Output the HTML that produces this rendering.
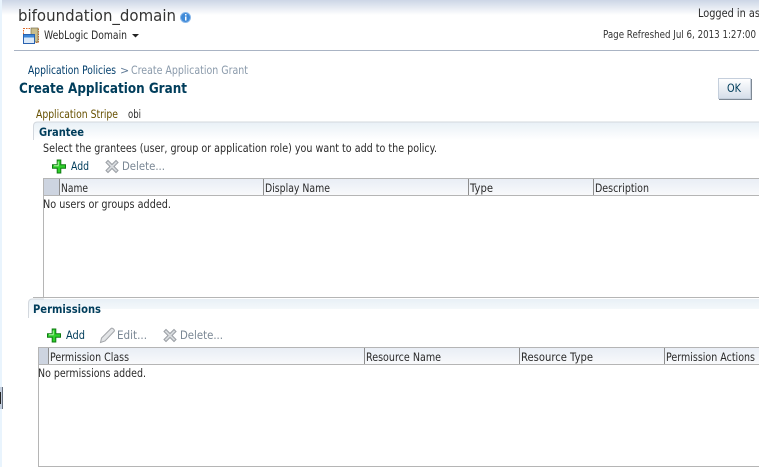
<!DOCTYPE html>
<html><head><meta charset="utf-8"><style>
html,body{margin:0;padding:0;background:#fff;width:759px;height:467px;overflow:hidden}
svg{display:block}
text{font-family:"DejaVu Sans","Liberation Sans",sans-serif;font-size:11.5px;fill:#2a2a2a}
</style></head><body>
<svg width="759" height="467" viewBox="0 0 759 467" xmlns="http://www.w3.org/2000/svg">
<defs>
<linearGradient id="top" x1="0" y1="0" x2="0" y2="1"><stop offset="0" stop-color="#ccd6e6"/><stop offset="1" stop-color="#fff"/></linearGradient>
<linearGradient id="sec" x1="0" y1="0" x2="0" y2="1"><stop offset="0" stop-color="#e8f0f6"/><stop offset="1" stop-color="#fff"/></linearGradient>
<linearGradient id="th" x1="0" y1="0" x2="0" y2="1"><stop offset="0" stop-color="#e9eef5"/><stop offset="1" stop-color="#f8f9fb"/></linearGradient>
<linearGradient id="btn" x1="0" y1="0" x2="0" y2="1"><stop offset="0" stop-color="#fff"/><stop offset="1" stop-color="#d5deea"/></linearGradient>
<g id="plus"><path d="M5.200 .5h3.600v4.700h4.700v3.600H8.800v4.700H5.200V8.800H.5V5.200h4.700z" fill="#2fd02a" stroke="#0f7a12" stroke-width="1"/><path d="M6.200 2v4.200H2" fill="none" stroke="#b5f5a8" stroke-width="1"/></g>
<g id="x"><path d="M1 3l2-2 4 4 4-4 2 2-4 4 4 4-2 2-4-4-4 4-2-2 4-4z" fill="#d8dbde" stroke="#9a9ea4" stroke-width="1"/></g>
</defs>

<rect x="0" y="0" width="2" height="467" fill="#e9f4fd"/>
<rect x="2" y="0" width="757" height="15" fill="url(#top)"/>
<rect x="0" y="387" width="3" height="22" fill="#c3cede"/>
<rect x="0" y="392" width="1" height="12" fill="#222"/>
<rect x="2" y="387" width="1" height="22" fill="#66707e"/>

<text x="18" y="21" textLength="158" lengthAdjust="spacingAndGlyphs" style="font-size:16px;fill:#333">bifoundation_domain</text>
<circle cx="185.500" cy="17.500" r="5" fill="#3f8ad8" stroke="#8ab8ea"/>
<rect x="185" y="14" width="1.500" height="1.500" fill="#fff"/><rect x="185" y="16.500" width="1.500" height="4" fill="#fff"/>

<rect x="23.500" y="28.500" width="15" height="14" fill="#fff" stroke="#dd6a2a" stroke-dasharray="1.500 1"/>
<rect x="31" y="28" width="7" height="14" fill="#c9bd8d" stroke="#77704d" stroke-width=".7"/>
<rect x="23.500" y="34.500" width="11" height="9" fill="#dbe9f8" stroke="#2a62b0"/>
<rect x="24" y="35" width="10" height="2.500" fill="#3d86d8"/>
<text x="44" y="39" textLength="83" lengthAdjust="spacingAndGlyphs">WebLogic Domain</text>
<path d="M132 34h7l-3.500 3.500z" fill="#222"/>

<text x="698" y="17" textLength="62" lengthAdjust="spacingAndGlyphs">Logged in as</text>
<text x="603" y="38" textLength="153" lengthAdjust="spacingAndGlyphs" style="font-size:10.500px;fill:#333">Page Refreshed Jul 6, 2013 1:27:00</text>
<rect x="14" y="50" width="745" height="1" fill="#aab4c4"/>

<text x="28" y="74" textLength="88" lengthAdjust="spacingAndGlyphs" style="fill:#003d6b">Application Policies</text>
<text x="120" y="74" style="fill:#5f7a96;font-size:11px">&gt;</text>
<text x="131" y="74" textLength="117" lengthAdjust="spacingAndGlyphs" style="fill:#8a9aab">Create Application Grant</text>
<text x="19" y="93" textLength="168" lengthAdjust="spacingAndGlyphs" style="font-size:14.500px;font-weight:bold;fill:#003d5b">Create Application Grant</text>

<rect x="718.500" y="78.500" width="32" height="20" fill="url(#btn)" stroke="#c5cfdc"/>
<path d="M751.500 79v20.500H719" fill="none" stroke="#7d8894"/>
<text x="727" y="92" textLength="14" lengthAdjust="spacingAndGlyphs" style="fill:#003d5b">OK</text>

<text x="36" y="118" textLength="82" lengthAdjust="spacingAndGlyphs" style="fill:#665000">Application Stripe</text>
<text x="128" y="118" textLength="13" lengthAdjust="spacingAndGlyphs">obi</text>

<path d="M33.500 140v-14q0-4 4-4H759v18z" fill="url(#sec)"/>
<path d="M33.500 140v-14q0-4 4-4H759" fill="none" stroke="#d3d8de"/>
<text x="39" y="136" textLength="45" lengthAdjust="spacingAndGlyphs" style="font-weight:bold;fill:#003d5b">Grantee</text>
<text x="43" y="152" textLength="394" lengthAdjust="spacingAndGlyphs">Select the grantees (user, group or application role) you want to add to the policy.</text>

<use href="#plus" x="52" y="159.500"/>
<text x="71" y="170" textLength="18" lengthAdjust="spacingAndGlyphs" style="fill:#003d5b">Add</text>
<use href="#x" x="105" y="159.500"/>
<text x="122" y="170" textLength="43" lengthAdjust="spacingAndGlyphs" style="fill:#7a8794">Delete...</text>

<rect x="43" y="179" width="716" height="16" fill="url(#th)"/>
<rect x="44" y="179" width="15" height="16" fill="#cdd4e0"/>
<rect x="43" y="178" width="716" height="1" fill="#b5b5b5"/>
<rect x="43" y="195" width="716" height="1" fill="#b5b5b5"/>
<rect x="43" y="178" width="1" height="120" fill="#b5b5b5"/>
<rect x="59" y="179" width="1" height="16" fill="#8d8d8d"/>
<rect x="263" y="179" width="1" height="16" fill="#8d8d8d"/>
<rect x="468" y="179" width="1" height="16" fill="#8d8d8d"/>
<rect x="593" y="179" width="1" height="16" fill="#8d8d8d"/>
<text x="61" y="192" textLength="27" lengthAdjust="spacingAndGlyphs">Name</text>
<text x="265" y="192" textLength="65" lengthAdjust="spacingAndGlyphs">Display Name</text>
<text x="470" y="192" textLength="23" lengthAdjust="spacingAndGlyphs">Type</text>
<text x="595" y="192" textLength="54" lengthAdjust="spacingAndGlyphs">Description</text>
<text x="43" y="208" textLength="128" lengthAdjust="spacingAndGlyphs">No users or groups added.</text>

<rect x="33" y="297" width="726" height="1" fill="#b5b5b5"/>
<path d="M28.500 318v-15q0-4 4-4H759v10H40v9z" fill="url(#sec)"/>
<path d="M28.500 318v-15q0-4 4-4H44" fill="none" stroke="#d3d8de"/>
<text x="33" y="313" textLength="68" lengthAdjust="spacingAndGlyphs" style="font-weight:bold;fill:#003d5b">Permissions</text>

<use href="#plus" x="47" y="328.500"/>
<text x="66" y="339" textLength="19" lengthAdjust="spacingAndGlyphs" style="fill:#003d5b">Add</text>
<path d="M100.500 342.500l1-4.500 9.500-9.500q1-1 2.500.5t.5 2.500L105 341z" fill="#e2e4e6" stroke="#a2a5a9"/>
<text x="117" y="339" textLength="30" lengthAdjust="spacingAndGlyphs" style="fill:#7a8794">Edit...</text>
<use href="#x" x="163" y="328.500"/>
<text x="180" y="339" textLength="43" lengthAdjust="spacingAndGlyphs" style="fill:#7a8794">Delete...</text>

<rect x="38" y="348" width="721" height="16" fill="url(#th)"/>
<rect x="39" y="348" width="10" height="16" fill="#cdd4e0"/>
<rect x="38" y="347" width="721" height="1" fill="#b5b5b5"/>
<rect x="38" y="364" width="721" height="1" fill="#b5b5b5"/>
<rect x="38" y="347" width="1" height="120" fill="#b5b5b5"/>
<rect x="38" y="466" width="721" height="1" fill="#b5b5b5"/>
<rect x="48" y="348" width="1" height="16" fill="#8d8d8d"/>
<rect x="364" y="348" width="1" height="16" fill="#8d8d8d"/>
<rect x="519" y="348" width="1" height="16" fill="#8d8d8d"/>
<rect x="664" y="348" width="1" height="16" fill="#8d8d8d"/>
<text x="50" y="361" textLength="79" lengthAdjust="spacingAndGlyphs">Permission Class</text>
<text x="366" y="361" textLength="75" lengthAdjust="spacingAndGlyphs">Resource Name</text>
<text x="521" y="361" textLength="72" lengthAdjust="spacingAndGlyphs">Resource Type</text>
<text x="666" y="361" textLength="89" lengthAdjust="spacingAndGlyphs">Permission Actions</text>
<text x="38" y="377" textLength="108" lengthAdjust="spacingAndGlyphs">No permissions added.</text>
</svg>
</body></html>
